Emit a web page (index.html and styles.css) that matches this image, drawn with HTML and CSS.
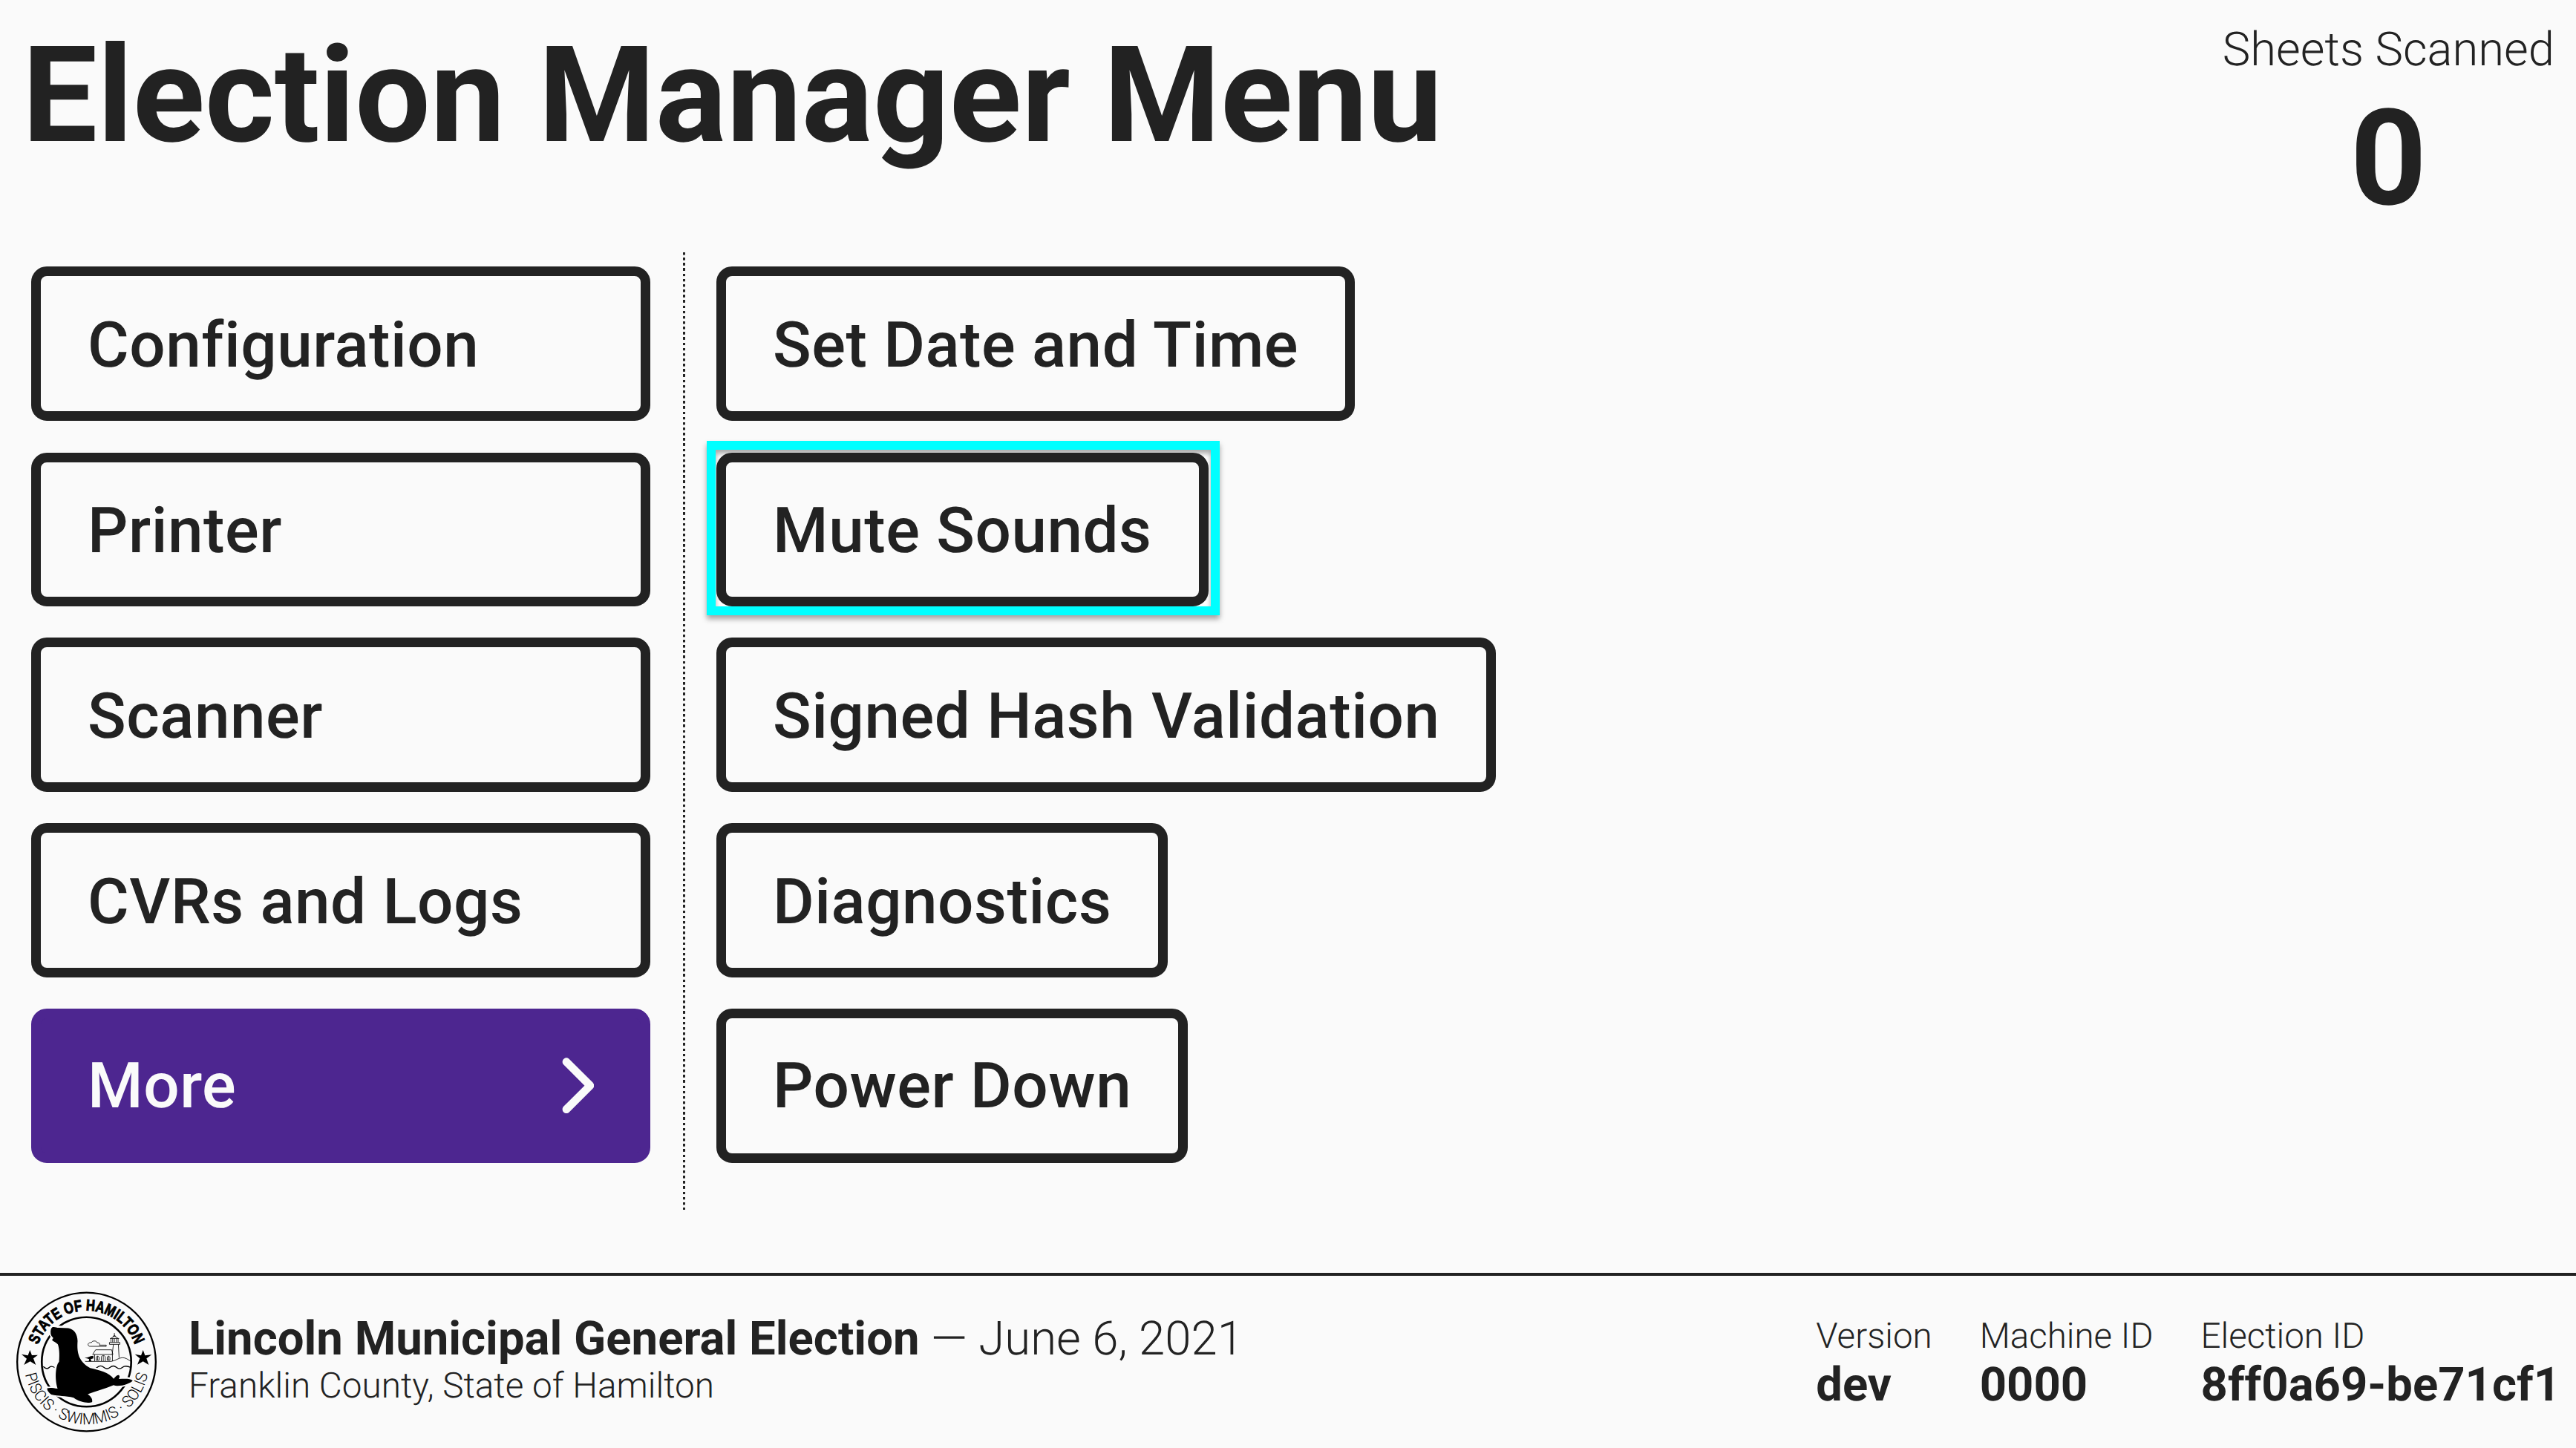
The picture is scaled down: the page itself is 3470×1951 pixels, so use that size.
FILE: index.html
```html
<!DOCTYPE html>
<html lang="en">
<head>
<meta charset="utf-8">
<title>Election Manager Menu</title>
<link rel="stylesheet" href="styles.css">
</head>
<body>
<div class="screen">
  <header class="header">
    <h1 class="title">Election Manager Menu</h1>
    <div class="counter">
      <div class="counter-label">Sheets Scanned</div>
      <div class="counter-value">0</div>
    </div>
  </header>
  <main class="menu">
    <nav class="menu-primary">
      <button class="btn" type="button">Configuration</button>
      <button class="btn" type="button">Printer</button>
      <button class="btn" type="button">Scanner</button>
      <button class="btn" type="button">CVRs and Logs</button>
      <button class="btn btn-active" type="button">More
        <svg class="chevron" viewBox="0 0 320 512" aria-hidden="true"><path d="M310.600 233.400c12.500 12.500 12.500 32.800 0 45.300l-192 192c-12.500 12.500-32.800 12.500-45.300 0s-12.500-32.800 0-45.300L242.700 256 73.400 86.600c-12.500-12.500-12.500-32.800 0-45.300s32.800-12.500 45.300 0l192 192z"/></svg>
      </button>
    </nav>
    <div class="menu-divider"></div>
    <div class="menu-secondary">
      <button class="btn" type="button">Set Date and Time</button>
      <button class="btn btn-focused" type="button">Mute Sounds</button>
      <button class="btn" type="button">Signed Hash Validation</button>
      <button class="btn" type="button">Diagnostics</button>
      <button class="btn" type="button">Power Down</button>
    </div>
  </main>
  <footer class="footer">
    <svg class="seal" viewBox="36 120 568 570" role="img" aria-label="Seal of the State of Hamilton">
      <defs>
        <path id="arc-top" d="M112 405A208 208 0 0 1 528 405"/>
        <path id="arc-bottom" d="M67 405A253 253 0 0 0 573 405"/>
      </defs>
      <!-- rings -->
      <circle class="line" cx="320" cy="405" r="280.500" stroke-width="7"/>
      <circle class="line" cx="320" cy="405" r="181" stroke-width="8"/>
      <!-- stars -->
      <path d="M91 357L99 378L123 377L105 391L115 417L92 403L67 417L78 392L57 374L83 379Z"/>
      <path d="M549 357L557 379L584 376L563 391L572 417L549 403L526 416L536 391L516 374L541 379Z"/>
      <!-- sea, shore, lighthouse -->
      <path class="line" stroke-width="4" d="M145 424C155 434 164 433 170 427S183 421 196 431M315 431C325 420 332 421 340 428S356 434 364 427S381 419 390 427S407 435 416 427S433 420 441 427S458 434 466 427S483 420 499 427"/>
      <path class="line" stroke-width="2.500" d="M307 403H420C440 400 450 388 465 388S485 394 499 402M353 375V402M425 375V402M345 375H427L422 356H357ZM424 375L429 334M449 334L452 388M413 334H455V326H413ZM419 326V310L433 300L448 310V326M415 310H452M433 288V303M433 310V326M426 310V326M441 310V326M428 303C428 296 438 296 438 303M359 398V387C361 380 369 380 371 387V398ZM365 382V398M404 398V387C406 380 413 380 415 387V398ZM409 382V398M380 402V385C382 377 394 377 396 385V402M388 380V402M328 339C322 331 334 325 340 327C342 318 362 318 363 327C374 328 376 333 372 337H400V342H336C331 342 329 341 328 339Z"/>
      <path d="M312 389L326 386L337 382L348 380V391L337 394L340 403H329L331 394L322 391Z"/>
      <!-- sea lion -->
      <path class="halo" d="M183 264L246 267C270 270 283 291 284 320C282 365 286 395 335 430C380 438 415 458 432 474C440 460 452 455 454 464C454 468 453 471 452 473C475 473 497 471 507 481C485 497 455 505 432 498C390 515 355 525 325 536C340 546 345 558 343 567C330 574 295 566 268 550C220 541 170 540 161 512L203 513C190 470 193 420 208 404C211 370 209 348 204 334C192 319 184 320 181 317C190 302 178 305 175 285Z"/>
      <path d="M183 264C192 262 198 266 208 267L246 268C270 272 283 291 284 320C281 365 286 402 335 430C370 438 412 448 430 473C437 466 443 456 452 459C456 464 453 469 451 474C475 473 497 471 507 481C498 493 450 509 430 499C390 515 355 525 325 536C340 546 345 558 343 567C330 574 295 570 268 550C235 541 205 544 178 537C167 530 160 520 161 512C173 508 187 512 203 513C191 475 194 420 209 404C212 370 209 348 204 334C196 325 185 322 181 317C179 314 186 312 185 307C180 302 176 299 175 290C174 278 176 268 183 264Z"/>
      <text class="seal-top"><textPath href="#arc-top" startOffset="50%" textLength="513" lengthAdjust="spacingAndGlyphs">STATE OF HAMILTON</textPath></text>
      <text class="seal-bottom"><textPath href="#arc-bottom" startOffset="50%" textLength="694" lengthAdjust="spacingAndGlyphs">PISCIS · SWIMMIS · SOLIS</textPath></text>
    </svg>
    <div class="election">
      <div class="election-title"><b>Lincoln Municipal General Election</b> — June 6, 2021</div>
      <div class="election-place">Franklin County, State of Hamilton</div>
    </div>
    <dl class="meta">
      <div><dt>Version</dt><dd>dev</dd></div>
      <div><dt>Machine ID</dt><dd>0000</dd></div>
      <div><dt>Election ID</dt><dd>8ff0a69-be71cf1</dd></div>
    </dl>
  </footer>
</div>
</body>
</html>
```
FILE: styles.css
```css
* { box-sizing: border-box; }

body {
  margin: 0;
  background: #fafafa;
  color: #222;
  font-family: Roboto, sans-serif;
  font-weight: 300;
  text-rendering: geometricPrecision;
}

.screen {
  display: flex;
  flex-direction: column;
  height: 1951px;
}

.header {
  display: flex;
  justify-content: space-between;
  height: 340px;
  padding: 0 29px 0 30px;
}

.title {
  margin: 21px 0 0;
  font-size: 179.900px;
  font-weight: 700;
  line-height: 216px;
}

.counter {
  padding-top: 29px;
  text-align: center;
}

.counter-label {
  font-size: 63.300px;
  line-height: 77px;
}

.counter-value {
  margin-top: 13px;
  font-size: 180px;
  font-weight: 700;
  line-height: 190px;
}

.menu {
  display: flex;
  height: 1290px;
  padding-left: 42px;
}

.menu-primary,
.menu-secondary {
  display: flex;
  flex-direction: column;
  gap: 42px;
  padding-top: 19px;
}

.menu-primary {
  width: 834px;
}

.menu-secondary {
  align-items: flex-start;
}

.menu-divider {
  width: 3px;
  margin: 0 42px 0 44px;
  background: repeating-linear-gradient(#222 0 3px, transparent 4px 6.150px, transparent 7.150px);
}

.btn {
  display: flex;
  align-items: center;
  justify-content: space-between;
  height: 208px;
  padding: 3px 63px 0;
  border: 13px solid #222;
  border-radius: 21px;
  background: #fafafa;
  color: #222;
  font: 500 85.333px Roboto, sans-serif;
  letter-spacing: 0.560px;
  text-rendering: inherit;
  white-space: nowrap;
}

.btn:nth-child(2) {
  height: 207px;
  margin-top: 1px;
}

.btn-active,
.btn:last-child {
  padding-top: 0;
}

.btn-active {
  border-color: #4d2690;
  background: #4d2690;
  color: #fafafa;
}

.chevron {
  width: 53.300px;
  height: 85.300px;
  fill: currentColor;
}

.menu-secondary {
  position: relative;
  z-index: 0;
}

.btn-focused {
  position: relative;
  background: linear-gradient(#fafafa, #fafafa) padding-box;
}

/* Focus indicator sits behind the button face, around its border. */
.btn-focused::before {
  content: "";
  position: absolute;
  z-index: -1;
  inset: -29px -28px -25px -26px;
  border: 12px solid #0ff;
  background: #fff;
  box-shadow: 0 5px 7px rgba(0, 0, 0, 0.35), inset 0 5px 7px rgba(0, 0, 0, 0.35);
}

.footer {
  display: flex;
  height: 236px;
  margin-top: auto;
  padding: 21px 21px 0 22px;
  border-top: 4px solid #222;
}

.seal {
  width: 189px;
  height: 190px;
}

.seal .line {
  fill: none;
  stroke: #000;
}

.seal .halo {
  fill: #fafafa;
  stroke: #fafafa;
  stroke-width: 14;
}

.seal-top,
.seal-bottom {
  font-size: 64px;
  text-anchor: middle;
}

.seal-top {
  font-family: "Liberation Sans", sans-serif;
  font-weight: 700;
  stroke: #000;
  stroke-width: 3;
}

.seal-bottom {
  font-family: Roboto, sans-serif;
  font-weight: 300;
}

.election {
  margin: 31px 0 0 43px;
}

.election-title {
  font-size: 63.450px;
  line-height: 66px;
}

.election-title b {
  font-weight: 700;
}

.election-place {
  margin-top: 2px;
  font-size: 47.700px;
  line-height: 56px;
}

.meta {
  display: flex;
  gap: 64px;
  margin: 32px 0 0 auto;
}

.meta dt {
  font-size: 47.500px;
  line-height: 56px;
}

.meta dd {
  margin: 5px 0 0;
  font-size: 63.400px;
  font-weight: 700;
  line-height: 66px;
}
```
